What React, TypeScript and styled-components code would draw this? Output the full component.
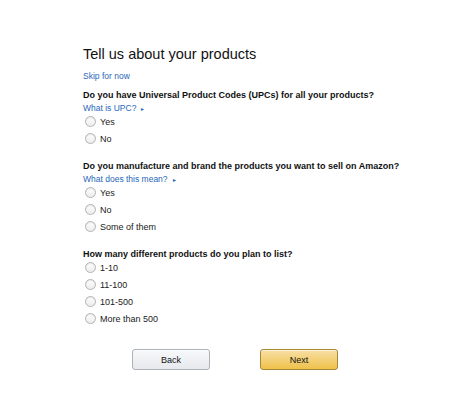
import React from 'react';
import styled, { createGlobalStyle } from 'styled-components';

const GlobalStyle = createGlobalStyle`
	html, body {
		margin: 0;
		padding: 0;
		background: #ffffff;
	}
	body {
		font-family: 'Liberation Sans', Arial, sans-serif;
		color: #111111;
	}
`;

type Question = {
	title: string;
	help?: string;
	options: string[];
};

const questions: Question[] = [
	{
		title: 'Do you have Universal Product Codes (UPCs) for all your products?',
		help: 'What is UPC?',
		options: ['Yes', 'No'],
	},
	{
		title: 'Do you manufacture and brand the products you want to sell on Amazon?',
		help: 'What does this mean?',
		options: ['Yes', 'No', 'Some of them'],
	},
	{
		title: 'How many different products do you plan to list?',
		options: ['1-10', '11-100', '101-500', 'More than 500'],
	},
];

const App = () => (
	<>
		<GlobalStyle />
		<Page>
			<Title>Tell us about your products</Title>
			<SkipLink>Skip for now</SkipLink>
			<Questions>
				{questions.map((q) => (
					<Section key={q.title}>
						<QuestionTitle>{q.title}</QuestionTitle>
						{q.help && (
							<HelpLink>
								{q.help}
								<Caret>▸</Caret>
							</HelpLink>
						)}
						<Options>
							{q.options.map((o) => (
								<Option key={o}>
									<Radio />
									<OptionLabel>{o}</OptionLabel>
								</Option>
							))}
						</Options>
					</Section>
				))}
			</Questions>
			<Actions>
				<Button>Back</Button>
				<Button $primary>Next</Button>
			</Actions>
		</Page>
	</>
);

const Page = styled.div`
	width: 457px;
	height: 404px;
	box-sizing: border-box;
	padding: 45px 0 0 83px;
	display: flex;
	flex-direction: column;
`;

const Title = styled.h1`
	margin: 0;
	font-size: 14.5px;
	font-weight: normal;
	line-height: 18px;
	color: #111;
`;

const SkipLink = styled.a`
	margin-top: 8px;
	font-size: 8.5px;
	line-height: 10px;
	color: #1f67b8;
	cursor: pointer;
`;

const Questions = styled.div`
	display: flex;
	flex-direction: column;
	gap: 15px;
	margin-top: 8px;
`;

const Section = styled.div`
	display: flex;
	flex-direction: column;
`;

const QuestionTitle = styled.div`
	font-size: 9px;
	font-weight: bold;
	line-height: 12px;
	color: #111;
`;

const HelpLink = styled.a`
	margin-top: 2px;
	font-size: 8.5px;
	line-height: 10px;
	color: #1f67b8;
	cursor: pointer;
`;

const Caret = styled.span`
	margin-left: 5px;
	font-size: 6px;
	color: #1f67b8;
`;

const Options = styled.div`
	display: flex;
	flex-direction: column;
	gap: 4px;
	margin-top: 1px;
`;

const Option = styled.label`
	display: flex;
	align-items: center;
	height: 13px;
	margin-left: 2px;
	gap: 4px;
	cursor: pointer;
`;

const Radio = styled.span`
	box-sizing: border-box;
	width: 11px;
	height: 11px;
	border-radius: 50%;
	border: 1px solid #b4b4b4;
	background: linear-gradient(#ffffff, #ececec);
	box-shadow: inset 0 1px 1px rgba(0, 0, 0, 0.1);
`;

const OptionLabel = styled.span`
	font-size: 9px;
	color: #222;
`;

const Actions = styled.div`
	display: flex;
	gap: 50px;
	margin-top: 24px;
	margin-left: 49px;
`;

const Button = styled.button<{ $primary?: boolean }>`
	width: 78px;
	height: 21px;
	padding: 0;
	border-radius: 3px;
	font-family: 'Liberation Sans', Arial, sans-serif;
	font-size: 9px;
	color: #111;
	cursor: pointer;
	border: 1px solid ${(p) => (p.$primary ? '#a88734' : '#adb1b8')};
	background: ${(p) =>
		p.$primary
			? 'linear-gradient(#f7dfa5, #f0c14b)'
			: 'linear-gradient(#f7f8fa, #e7e9ec)'};
	box-shadow: 0 1px 0 rgba(255, 255, 255, 0.6) inset;
`;

export default App;
